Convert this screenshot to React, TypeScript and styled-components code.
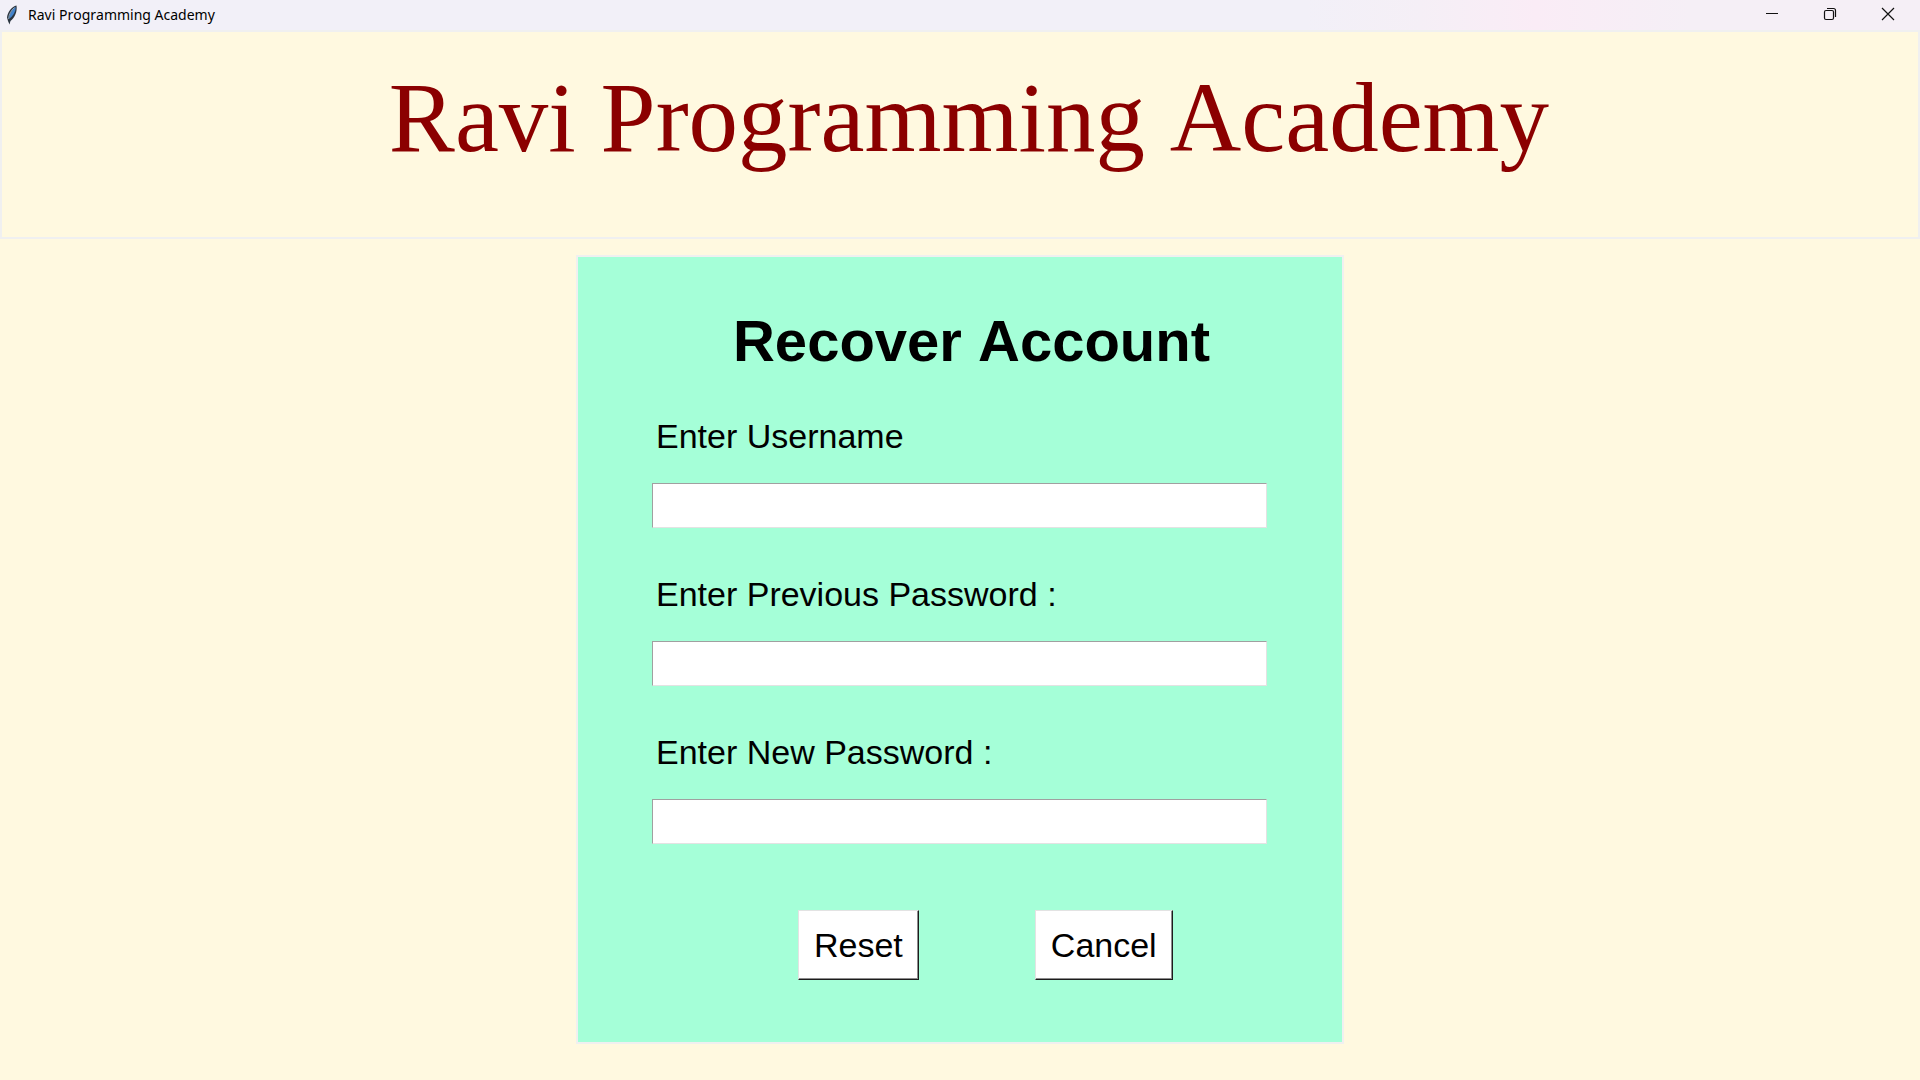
import React from "react";
import styled, { createGlobalStyle } from "styled-components";

const GlobalStyle = createGlobalStyle`
  * { box-sizing: border-box; }
  body {
    margin: 0;
    background: #fff9e0;
    color: #000;
    font-family: "Liberation Sans", Arial, sans-serif;
    font-kerning: none;
  }
`;

const Window = styled.div`
  min-height: 100vh;
  display: flex;
  flex-direction: column;
`;

const TitleBar = styled.header`
  height: 30px;
  display: flex;
  align-items: center;
  padding-left: 6px;
  gap: 8px;
  background: linear-gradient(90deg, #f2f0f8 0%, #f2f0f8 68%, #f5eff6 74%, #faecf6 80%, #f5eff6 88%, #f5eff6 100%);
  font-family: "Noto Sans", "Open Sans", sans-serif;
  font-size: 14px;
  line-height: 20px;
`;

const Caption = styled.span`
  flex: 1;
`;

const WindowControls = styled.div`
  display: flex;
  align-self: stretch;
  padding: 0 3px 2px 0;
`;

const ControlButton = styled.button`
  width: 58px;
  padding: 0;
  border: 0;
  background: transparent;
  display: grid;
  place-items: center;
`;

const Banner = styled.div`
  height: 209px;
  padding: 29px 0 0 18px;
  border: 2px solid #f0f0f0;
  text-align: center;
`;

const BannerTitle = styled.h1`
  margin: 0;
  color: #8b0000;
  font-family: "Liberation Serif", "Times New Roman", serif;
  font-size: 99px;
  font-weight: 400;
  line-height: 114px;
`;

const Panel = styled.form`
  width: 768px;
  max-width: 100%;
  margin: 16px auto 36px;
  padding: 50px 75px 62px 74px;
  border: 2px solid #f0f0f0;
  background: #a5ffd8;
`;

const PanelTitle = styled.h2`
  margin: 0;
  padding-left: 24px;
  font-size: 58px;
  line-height: 68px;
  text-align: center;
`;

const Fields = styled.div`
  display: flex;
  flex-direction: column;
  gap: 46px;
  margin-top: 41px;
`;

const Field = styled.div`
  display: flex;
  flex-direction: column;
  gap: 27px;
`;

const FieldLabel = styled.label`
  padding-left: 4px;
  font-size: 34px;
  line-height: 40px;
`;

const TextInput = styled.input`
  width: 100%;
  height: 45px;
  padding: 0 4px;
  border: 1px solid;
  border-color: #a0a0a0 #e3e3e3 #e3e3e3 #a0a0a0;
  border-radius: 0;
  background: #fff;
  font: 34px "Liberation Sans", Arial, sans-serif;
  outline: none;
`;

const Actions = styled.div`
  display: flex;
  gap: 116px;
  margin-top: 66px;
  padding-left: 146px;
`;

const ActionButton = styled.button`
  height: 70px;
  padding: 0 15px;
  border: 1px solid;
  border-color: #e3e3e3 #1c1c1c #1c1c1c #e3e3e3;
  border-radius: 0;
  box-shadow: inset -1px -1px #8c8c8c;
  background: #fff;
  color: #000;
  font: 34px "Liberation Sans", Arial, sans-serif;
`;

const fields = [
  { id: "username", label: "Enter Username", type: "text" },
  { id: "previous", label: "Enter Previous Password :", type: "password" },
  { id: "next", label: "Enter New Password :", type: "password" },
];

const Feather = () => (
  <svg width="14" height="20" viewBox="0 0 14 20" aria-hidden="true">
    <path d="M10.500 0.500C6 1.500 1.500 7 1 12.500L2 16L3.500 19.500L4.500 16C8.500 13 11.500 7 10.500 0.500Z" fill="#2b3540" />
    <path d="M9.700 2C6.500 4 3.200 8.500 3.200 13.800C6.500 11.500 9.800 7 9.700 2Z" fill="#4283cc" />
    <path d="M8.500 2.500C5 5.500 2.800 9.500 2.600 14" stroke="#a9bccd" strokeWidth="0.8" fill="none" />
  </svg>
);

export default function App() {
  return (
    <>
      <GlobalStyle />
      <Window>
        <TitleBar>
          <Feather />
          <Caption>Ravi Programming Academy</Caption>
          <WindowControls>
            <ControlButton aria-label="Minimize">
              <svg width="14" height="14" viewBox="0 0 14 14" fill="none" stroke="#111" strokeWidth="1">
                <path d="M1 6.500H13" />
              </svg>
            </ControlButton>
            <ControlButton aria-label="Restore">
              <svg width="14" height="14" viewBox="0 0 14 14" fill="none" stroke="#111" strokeWidth="1.200">
                <rect x="1.500" y="3.500" width="9" height="9" rx="1.500" />
                <path d="M4 1.500H10.500Q12.500 1.500 12.500 3.500V10" />
              </svg>
            </ControlButton>
            <ControlButton aria-label="Close">
              <svg width="14" height="14" viewBox="0 0 14 14" fill="none" stroke="#111" strokeWidth="1.200">
                <path d="M1 1L13 13M13 1L1 13" />
              </svg>
            </ControlButton>
          </WindowControls>
        </TitleBar>
        <Banner>
          <BannerTitle>Ravi Programming Academy</BannerTitle>
        </Banner>
        <Panel onSubmit={(event) => event.preventDefault()}>
          <PanelTitle>Recover Account</PanelTitle>
          <Fields>
            {fields.map((field) => (
              <Field key={field.id}>
                <FieldLabel htmlFor={field.id}>{field.label}</FieldLabel>
                <TextInput id={field.id} type={field.type} />
              </Field>
            ))}
          </Fields>
          <Actions>
            <ActionButton type="submit">Reset</ActionButton>
            <ActionButton type="button">Cancel</ActionButton>
          </Actions>
        </Panel>
      </Window>
    </>
  );
}
